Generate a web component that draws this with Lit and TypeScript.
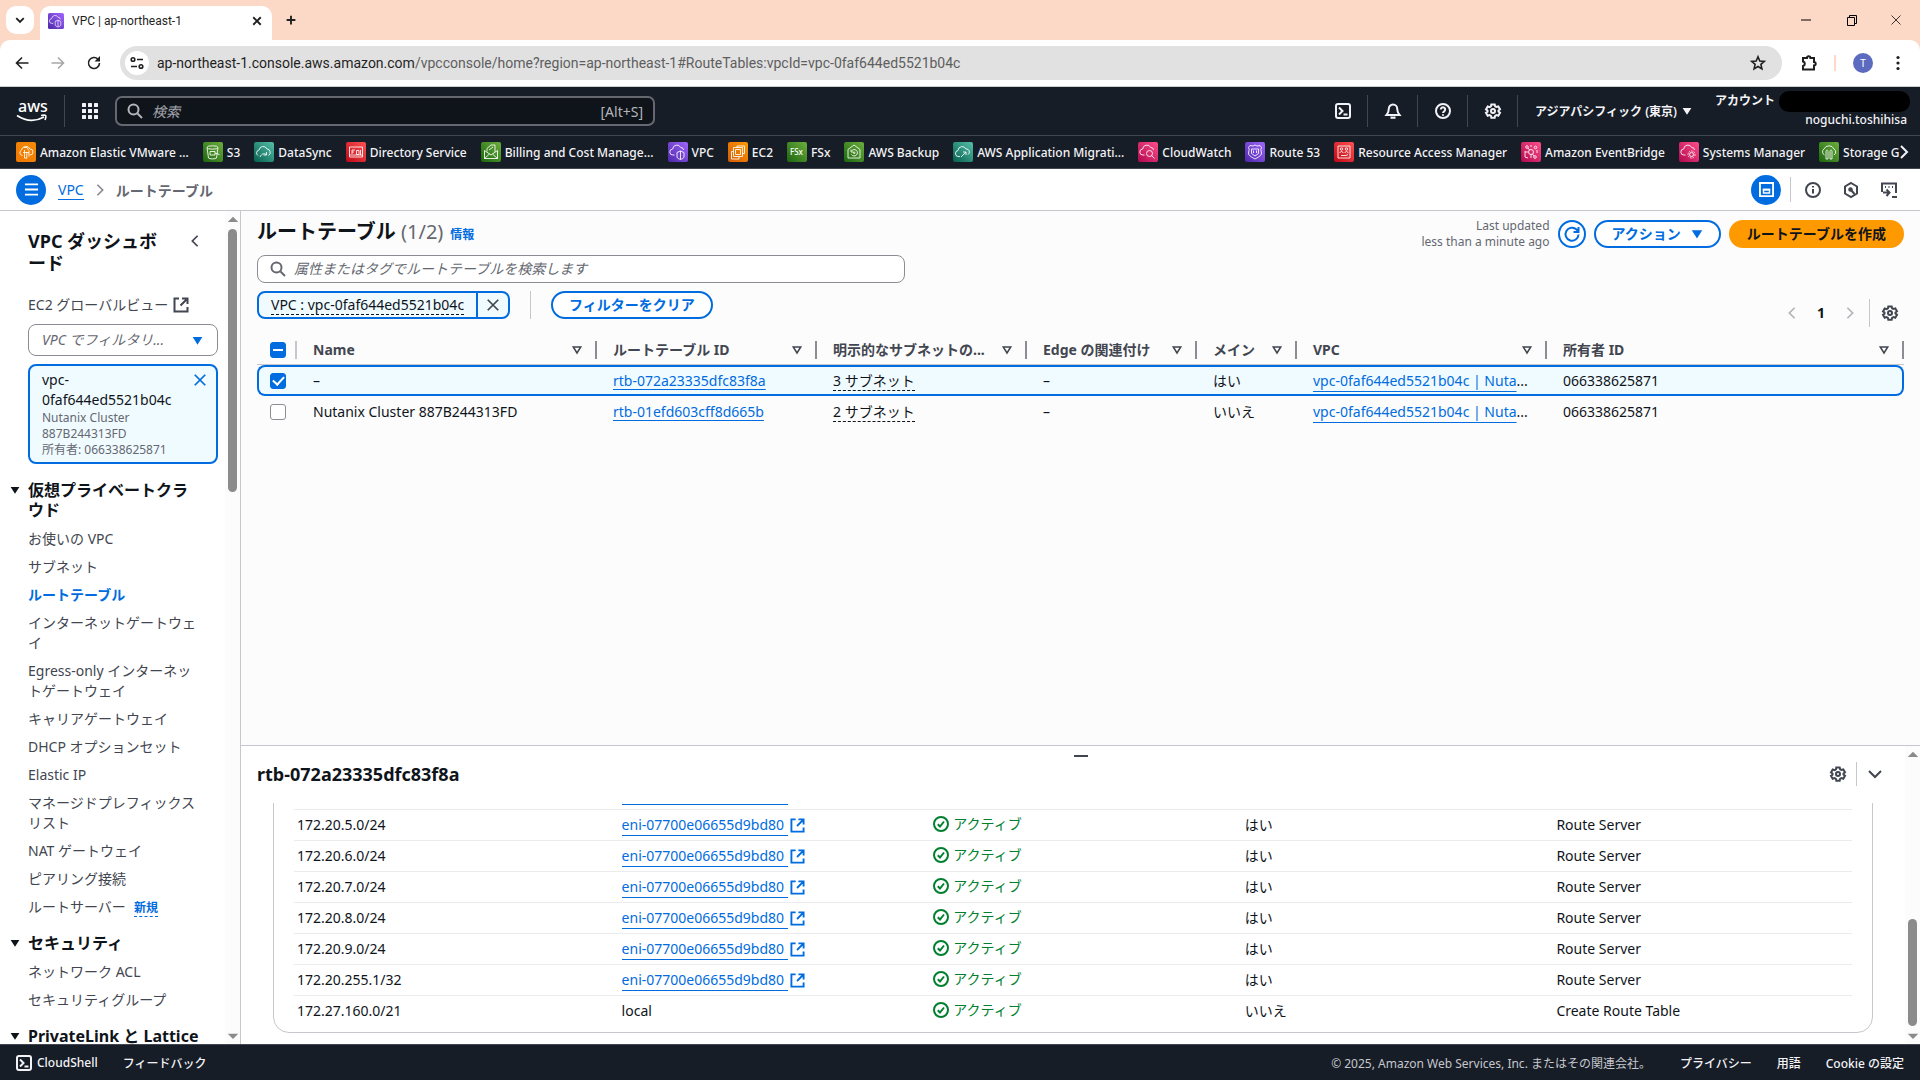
import { LitElement, html, svg, css } from "lit";
import { customElement, property } from "lit/decorators.js";

const shapes: Record<string, any> = {
  chevronLeft: svg`<path d="M11 2 5 8l6 6"/>`,
  chevronRight: svg`<path d="m5 2 6 6-6 6"/>`,
  chevronDown: svg`<path d="m2 5 6 6 6-6"/>`,
  close: svg`<path d="m2 2 12 12M14 2 2 14"/>`,
  plus: svg`<path d="M8 1v14M1 8h14"/>`,
  minimize: svg`<path d="M3 8h10"/>`,
  restore: svg`<path d="M3.500 5.500h7v8h-7zM5.500 5.500v-2h7v8h-2"/>`,
  back: svg`<path d="M14.500 8H2.500M8 2.500 2.500 8 8 13.500"/>`,
  forward: svg`<path d="M1.500 8h12M8 2.500 13.500 8 8 13.500"/>`,
  reload: svg`<path d="M13.500 8A5.500 5.500 0 1 1 12 4.200"/><path d="M14 1v5.500H8.500z" fill="currentColor" stroke="none"/>`,
  refresh: svg`<path d="M14.500 8.500a6.500 6.500 0 1 1-2-5l2 2M14.500 1v5h-5"/>`,
  tune: svg`<circle cx="4" cy="4.500" r="1.800"/><path d="M8 4.500h6M2 11.500h6"/><circle cx="12" cy="11.500" r="1.800"/>`,
  star: svg`<path d="m8 1.800 1.800 4.200 4.500.4-3.400 3 1 4.500L8 11.500l-3.900 2.400 1-4.500-3.400-3 4.500-.4z"/>`,
  puzzle: svg`<path d="M2 3h4a1.700 1.700 0 0 1 3.400 0H13v4a1.700 1.700 0 0 1 0 3.400V14.500H2V11a2.300 2.300 0 0 0 0-4.500z"/>`,
  dots: svg`<g fill="currentColor" stroke="none"><circle cx="8" cy="2.500" r="1.600"/><circle cx="8" cy="8" r="1.600"/><circle cx="8" cy="13.500" r="1.600"/></g>`,
  grid: svg`<g fill="currentColor" stroke="none">${[0, 6, 12].map((x) => [0, 6, 12].map((y) => svg`<rect x=${x} y=${y} width="4" height="4" rx=".5"/>`))}</g>`,
  search: svg`<circle cx="6.500" cy="6.500" r="5"/><path d="m10.500 10.500 4.500 4.500"/>`,
  shell: svg`<rect x="1" y="1" width="14" height="14" rx="2"/><path d="m4 4.500 3.500 3.500L4 11.500M8.500 11.500h4"/>`,
  bell: svg`<path d="M8 1.500a4.200 4.200 0 0 0-4.200 4.200c0 3-.8 4.500-2.300 6.300h13c-1.500-1.800-2.300-3.300-2.300-6.300A4.200 4.200 0 0 0 8 1.500z"/><path d="M6.500 13.500v1.300h3v-1.300"/>`,
  help: svg`<circle cx="8" cy="8" r="7"/><path d="M5.800 6.500a2.200 2.200 0 1 1 3.400 1.800C8.300 8.900 8 9.200 8 10M8 11.300v1.400"/>`,
  gear: svg`<path d="m6.300 1.500-.4 1.900-1.300.7-1.900-.6-1.700 2.900L2.500 7.500v1.300L1 9.800l1.700 2.900 1.900-.6 1.300.7.400 1.900h3.400l.4-1.900 1.300-.7 1.900.6L15 9.800l-1.500-1.200V7.400L15 6.300l-1.700-2.900-1.900.6-1.300-.7-.4-1.800z"/><circle cx="8" cy="8" r="2"/>`,
  menu: svg`<path d="M1 2.500h14M1 8h14M1 13.500h14"/>`,
  splitPanel: svg`<path d="M1 1h14v14H1z"/><path d="M4.800 8.200h6.400v3.600H4.800z" stroke-width="1.500"/><path d="M4 8h8"/>`,
  info: svg`<circle cx="8" cy="8" r="7"/><path d="M8 7v4.500M8 4v1.600"/>`,
  hexagon: svg`<path d="m8 1 6 3.500v7L8 15l-6-3.500v-7z"/><path d="m8 8 3.500 4"/><circle cx="7.500" cy="7.500" r="1.300" fill="currentColor"/>`,
  prompt: svg`<path d="M1 10V1.500h14V11M4 5h1M7.500 5h1M11 5h1M2 10.500h6M5.500 7.500l3 3-3 3.500M11 15h5"/>`,
  external: svg`<path d="M6 1.500H1.500v13h13V10M9 1.500h5.500V7M14 2 7.500 8.500"/>`,
  check: svg`<circle cx="8" cy="8" r="7"/><path d="m4.800 8.200 2.200 2.300 4-5"/>`,
  triangle: svg`<path d="M1 3h14L8 14z" fill="currentColor" stroke="none"/>`,
  triangleOpen: svg`<path d="M3 4h10l-5 8z"/>`,
  triangleUp: svg`<path d="M8 5 15 12H1z" fill="currentColor" stroke="none"/>`,
  triangleDown: svg`<path d="m8 12 7-7H1z" fill="currentColor" stroke="none"/>`,
};

@customElement("ui-icon")
class UiIcon extends LitElement {
  @property() name = "";
  static styles = css`
    :host { display: inline-flex; flex: none; width: 16px; height: 16px; }
    svg { width: 100%; height: 100%; fill: none; stroke: currentColor; stroke-width: var(--stroke, 2); overflow: visible; }
  `;
  render() {
    return html`<svg viewBox="0 0 16 16" aria-hidden="true">${shapes[this.name]}</svg>`;
  }
}

const cloud = svg`<path d="M6.500 13H5a3 3 0 0 1-.3-6 4.200 4.200 0 0 1 8-1.500A2.600 2.600 0 0 1 15.500 8"/>`;
const glyphs: Record<string, any> = {
  evs: svg`<path d="M6.500 13.500H6a3 3 0 0 1-.5-5.500A4.500 4.500 0 0 1 14 7a3 3 0 0 1 0 6M7 10.500h6M8.500 8v8M13 8.500v6M10.800 10.500v6M8.500 16h2.300M8 5.500h3l1.500 2.500"/>`,
  s3: svg`<ellipse cx="9.500" cy="5.500" rx="5.500" ry="1.700"/><path d="m4 5.500 1.500 10.500c1 1.200 7 1.200 8 0L15 5.500M7 9.500h5v3.500H7zM12 11l4.500 1.500"/>`,
  datasync: svg`<path d="M4 13.500a3 3 0 0 1 1-5.500 4.200 4.200 0 0 1 8-1A3.500 3.500 0 0 1 14.500 13.500M6 15c2-4 5-4 6.500-2M12.500 10v3h-3"/>`,
  directory: svg`<path d="M3.500 5h13v10h-13zM6 12V8h3M6 10h2M10.500 8.500h2.500v4h-2.500zM14.500 8v5M3.500 13h13"/>`,
  billing: svg`<path d="M3.500 8.500v8h13v-8L10 13zM3.500 16.500l5-4.500M16.500 16.500l-5-4.500M6 9.500V6.500L10 3h4v7M8 8l4-3"/>`,
  vpc: svg`${cloud}<path d="M9 10.500 12.500 9l3.500 1.500v4.500c0 1-2 2-3.500 2.500-1.500-.5-3.500-1.500-3.500-2.500zM12.500 9v8.500"/>`,
  ec2: svg`<path d="M7.500 7.500h5v5h-5zM9 5.500V4h7.500v7.500H15M11 15v2H3.500V9.500H5M5.500 5.500h9v9h-9z"/>`,
  fsx: svg`<text x="3" y="13" font-size="8" font-family="Noto Sans, sans-serif" fill="#fff" stroke="none">FSx</text>`,
  backup: svg`<path d="m10 3 6 4.500V16H4V7.500zM7.500 9a3.200 3.200 0 1 1 0 3.500M7 7.500v2.500h2.500"/><circle cx="10.200" cy="10.800" r=".8"/>`,
  migration: svg`<path d="M7 14.500H6a3 3 0 0 1-1-6 4.200 4.200 0 0 1 8-1.500 3 3 0 0 1 2 5.500M8 15l5-5M10 10h3v3"/>`,
  cloudwatch: svg`${cloud}<circle cx="11.500" cy="11.500" r="3"/><path d="m13.500 13.500 3 3"/>`,
  route53: svg`<path d="m10 3 2 1 3-.5 1.500 2-.7 2 .7 3.500c0 3-4 4.500-6.500 6-2.500-1.500-6.500-3-6.500-6L4.200 7.500l-.7-2 1.500-2 3 .5z"/><path d="M6.500 7h7v4.500L10 14l-3.500-2.500zM8.500 8.500v2.500M11.500 8.500v2.500"/>`,
  ram: svg`<path d="M4 4h12v12H4z"/><circle cx="7.500" cy="7" r="1.200"/><circle cx="12.500" cy="7" r="1.200"/><path d="M6 11c0-2 3-2 3 0M11 11c0-2 3-2 3 0M7 13.500h5l2-1"/>`,
  eventbridge: svg`<circle cx="10" cy="10" r="2.500"/><circle cx="6" cy="5" r="1.300"/><circle cx="14" cy="15" r="1.300"/><circle cx="14.500" cy="5.500" r="1.300"/><path d="M7 6l1.500 2M13 14l-1.500-2M4 9v6l3 1M16 11V8M7 10H4M11 4H9M10 12.500V16"/>`,
  systems: svg`${cloud}<circle cx="12.500" cy="12.500" r="3.500" stroke-dasharray="1.600 1"/><circle cx="12.500" cy="12.500" r="2"/>`,
  storage: svg`<path d="M5.500 13a3.500 3.500 0 0 1-.5-6 5.500 5.500 0 0 1 10 0 3.500 3.500 0 0 1 0 6M7 17V9.500c0-2 2-2 2 0V17M11 17V9.500c0-2 2-2 2 0V17M7 17h2M11 17h2"/>`,
};
const tones: Record<string, [string, string]> = {
  orange: ["#d45b07", "#ff9900"],
  amber: ["#f07800", "#f58b05"],
  green: ["#1b660f", "#6cae3e"],
  teal: ["#055f4e", "#56c0a7"],
  red: ["#bd0816", "#ff5252"],
  purple: ["#4d27a8", "#a166ff"],
  pink: ["#b0084d", "#ff4f8b"],
};

@customElement("service-icon")
class ServiceIcon extends LitElement {
  @property() glyph = "";
  @property() tone = "green";
  static styles = css`
    :host { display: inline-flex; flex: none; width: 20px; height: 20px; }
    svg { width: 100%; height: 100%; }
    .mark { fill: none; stroke: #fff; stroke-width: 1; stroke-opacity: .85; }
  `;
  render() {
    const [from, to] = tones[this.tone];
    return html`<svg viewBox="0 0 20 20" aria-hidden="true">
      <defs><linearGradient id="g" x1="0" y1="1" x2="1" y2="0"><stop offset="0" stop-color=${from}/><stop offset="1" stop-color=${to}/></linearGradient></defs>
      <rect width="20" height="20" rx="2" fill="url(#g)"/><g class="mark">${glyphs[this.glyph]}</g></svg>`;
  }
}

const base = css`
  * { box-sizing: border-box; }
  button, input, select { font: inherit; color: inherit; margin: 0; padding: 0; border: 0; background: none; }
  button { display: inline-flex; align-items: center; justify-content: center; }
  a { color: inherit; text-decoration: none; }
  ul, h1, h2, h3 { margin: 0; padding: 0; list-style: none; }
`;

@customElement("browser-chrome")
class BrowserChrome extends LitElement {
  static styles = [base, css`
    :host { display: block; background: #fcd9c7; color: #1f1f1f; font-family: Roboto, "Noto Sans", sans-serif; }
    .tabs { display: flex; height: 40px; align-items: center; padding: 0 18px 0 6px; }
    .tab-search { width: 28px; height: 28px; border-radius: 10px; background: #fff; }
    .tab { display: flex; align-items: center; align-self: flex-end; gap: 8px; width: 232px; height: 34px; margin: 0 14px 0 6px; padding: 0 10px 4px 8px; border-radius: 10px 10px 0 0; background: #fff; font-size: 12px; }
    .tab service-icon { width: 16px; height: 16px; }
    .tab-title { flex: 1; }
    .small { width: 10px; height: 10px; --stroke: 3; }
    .windows { display: flex; gap: 30px; margin-left: auto; color: #000; --stroke: 1; }
    .windows .small { width: 12px; height: 12px; --stroke: 1; }
    .bar { display: flex; align-items: center; height: 47px; padding: 0 14px; background: #fff; border-bottom: 1px solid #d0d0d0; border-radius: 10px 10px 0 0; }
    .nav { display: flex; gap: 20px; width: 106px; }
    .off { color: #a8a8a8; }
    .omni { display: flex; flex: 1; align-items: center; gap: 8px; height: 34px; padding: 0 16px 0 5px; border-radius: 17px; background: #e1e1e1; font-size: 14px; }
    .site { width: 24px; height: 24px; border-radius: 50%; background: #fff; }
    .url { flex: 1; color: #1f1f1f; }
    .path { color: #5e5e5e; }
    .omni ui-icon, .nav ui-icon { --stroke: 1.6; }
    .tools { display: flex; align-items: center; gap: 17px; margin-left: 19px; }
    .rule { width: 2px; height: 16px; background: #fcd9c7; }
    .avatar { width: 20px; height: 20px; border-radius: 50%; background: #5c6bc0; color: #fff; font-size: 10px; }
  `];
  render() {
    return html`
      <div class="tabs">
        <button class="tab-search" aria-label="タブを検索"><ui-icon class="small" name="chevronDown"></ui-icon></button>
        <div class="tab"><service-icon glyph="vpc" tone="purple"></service-icon><span class="tab-title">VPC | ap-northeast-1</span><button aria-label="タブを閉じる"><ui-icon class="small" name="close"></ui-icon></button></div>
        <button aria-label="新しいタブ"><ui-icon class="small" name="plus"></ui-icon></button>
        <div class="windows">
          <button aria-label="最小化"><ui-icon name="minimize"></ui-icon></button>
          <button aria-label="元に戻す"><ui-icon name="restore"></ui-icon></button>
          <button aria-label="閉じる"><ui-icon class="small" name="close"></ui-icon></button>
        </div>
      </div>
      <div class="bar">
        <div class="nav">
          <button aria-label="戻る"><ui-icon name="back"></ui-icon></button>
          <button class="off" aria-label="進む"><ui-icon name="forward"></ui-icon></button>
          <button aria-label="再読み込み"><ui-icon name="reload"></ui-icon></button>
        </div>
        <div class="omni">
          <button class="site" aria-label="サイト情報"><ui-icon name="tune"></ui-icon></button>
          <span class="url">ap-northeast-1.console.aws.amazon.com<span class="path">/vpcconsole/home?region=ap-northeast-1#RouteTables:vpcId=vpc-0faf644ed5521b04c</span></span>
          <button aria-label="ブックマーク"><ui-icon name="star"></ui-icon></button>
        </div>
        <div class="tools">
          <button aria-label="拡張機能"><ui-icon name="puzzle"></ui-icon></button>
          <span class="rule"></span>
          <button class="avatar" aria-label="プロフィール">T</button>
          <button aria-label="メニュー"><ui-icon name="dots"></ui-icon></button>
        </div>
      </div>`;
  }
}

const favorites: [string, string, string][] = [
  ["evs", "amber", "Amazon Elastic VMware ..."],
  ["s3", "green", "S3"],
  ["datasync", "teal", "DataSync"],
  ["directory", "red", "Directory Service"],
  ["billing", "green", "Billing and Cost Manage..."],
  ["vpc", "purple", "VPC"],
  ["ec2", "orange", "EC2"],
  ["fsx", "green", "FSx"],
  ["backup", "green", "AWS Backup"],
  ["migration", "teal", "AWS Application Migrati..."],
  ["cloudwatch", "pink", "CloudWatch"],
  ["route53", "purple", "Route 53"],
  ["ram", "red", "Resource Access Manager"],
  ["eventbridge", "pink", "Amazon EventBridge"],
  ["systems", "pink", "Systems Manager"],
  ["storage", "green", "Storage G"],
];

@customElement("console-header")
class ConsoleHeader extends LitElement {
  static styles = [base, css`
    :host { display: block; background: #161d26; color: #f3f3f7; font-size: 12px; font-weight: 500; }
    .top { display: flex; height: 49px; align-items: center; border-bottom: 1px solid #424650; }
    .logo { width: 32px; height: 24px; margin: 0 16px; }
    .rule { width: 1px; height: 32px; background: #424650; }
    .apps { margin: 0 17px; }
    .search { display: flex; width: 540px; height: 30px; align-items: center; gap: 9px; padding: 0 10px; border: 2px solid #656871; border-radius: 7px; background: #0f141a; color: #b4b4bb; font-size: 14px; font-weight: 400; }
    .search input { flex: 1; min-width: 0; outline: 0; }
    .search input::placeholder { color: #a4a4ad; font-style: italic; opacity: 1; }
    .tools { display: flex; align-items: center; margin-left: auto; }
    .tools > button:not(.region) { width: 49px; height: 32px; }
    .region { gap: 5px; padding: 0 23px 0 17px; font-weight: 600; }
    .region ui-icon { width: 10px; height: 10px; }
    .account { display: flex; flex-direction: column; align-items: flex-end; padding-right: 10px; line-height: 18px; }
    .who { display: flex; align-items: center; gap: 4px; font-weight: 700; }
    .mask { width: 131px; height: 21px; border-radius: 10px; background: #000; }
    .name { padding: 0 3px 4px 0; line-height: 16px; }
    .favs { display: flex; height: 33px; align-items: center; padding: 0 8px 0 16px; border-bottom: 1px solid #424650; }
    .list { display: flex; flex: 1; gap: 14px; min-width: 0; overflow: hidden; }
    .list a { display: inline-flex; flex: none; align-items: center; gap: 4px; white-space: nowrap; }
    .next { margin-left: -5px; }
  `];
  render() {
    return html`
      <div class="top">
        <a class="logo" href="#" aria-label="aws"><svg width="32" height="24" viewBox="0 0 32 24"><text x="2" y="13" font-size="16" font-family="Noto Sans, sans-serif" fill="#fff">aws</text><path d="M1 16.500c9 6 19 6 27 1.500M25 16.500c5-1 6-.5 4 4.500" fill="none" stroke="#fff" stroke-width="1.600"/></svg></a>
        <span class="rule"></span>
        <button class="apps" aria-label="サービス"><ui-icon name="grid"></ui-icon></button>
        <label class="search"><ui-icon name="search"></ui-icon><input type="search" placeholder="検索" aria-label="検索"><span>[Alt+S]</span></label>
        <div class="tools">
          <button aria-label="CloudShell"><ui-icon name="shell"></ui-icon></button><span class="rule"></span>
          <button aria-label="通知"><ui-icon name="bell"></ui-icon></button><span class="rule"></span>
          <button aria-label="ヘルプ"><ui-icon name="help"></ui-icon></button><span class="rule"></span>
          <button aria-label="設定"><ui-icon name="gear"></ui-icon></button><span class="rule"></span>
          <button class="region">アジアパシフィック (東京) <ui-icon name="triangle"></ui-icon></button>
        </div>
        <div class="account"><span class="who">アカウント<span class="mask"></span></span><span class="name">noguchi.toshihisa</span></div>
      </div>
      <nav class="favs"><div class="list">${favorites.map(([g, t, label]) => html`<a href="#"><service-icon glyph=${g} tone=${t}></service-icon>${label}</a>`)}</div>
        <button class="next" aria-label="次へ"><ui-icon name="chevronRight"></ui-icon></button></nav>`;
  }
}

@customElement("scroll-rail")
class ScrollRail extends LitElement {
  static styles = css`
    :host { display: flex; flex-direction: column; align-items: center; width: 15px; padding: 2px 0; background: #fcfcfc; color: #8b8b8b; }
    ui-icon { width: 12px; height: 12px; }
    .track { flex: 1; display: flex; flex-direction: column; padding: 4px 0; }
    .thumb { width: 9px; border-radius: 5px; background: #8b8b8b; }
    :host([end]) .track { justify-content: flex-end; }
    :host([end]) .thumb { height: 41%; }
    :host(:not([end])) .thumb { height: 33%; }
  `;
  render() {
    return html`<ui-icon name="triangleUp"></ui-icon><div class="track"><div class="thumb"></div></div><ui-icon name="triangleDown"></ui-icon>`;
  }
}

const sections: { title: string; items: string[] }[] = [
  { title: "仮想プライベートクラウド", items: ["お使いの VPC", "サブネット", "ルートテーブル", "インターネットゲートウェイ", "Egress-only インターネットゲートウェイ", "キャリアゲートウェイ", "DHCP オプションセット", "Elastic IP", "マネージドプレフィックスリスト", "NAT ゲートウェイ", "ピアリング接続", "ルートサーバー"] },
  { title: "セキュリティ", items: ["ネットワーク ACL", "セキュリティグループ"] },
  { title: "PrivateLink と Lattice", items: [] },
];

@customElement("side-nav")
class SideNav extends LitElement {
  static styles = [base, css`
    :host { display: flex; min-height: 0; border-right: 1px solid #c6c6cd; background: #fff; color: #424650; font-size: 14px; line-height: 20px; }
    .body { flex: 1; min-width: 0; overflow: hidden; padding: 19px 7px 0 10px; }
    .head { display: flex; justify-content: space-between; padding: 0 16px 0 18px; color: #0f141a; }
    h2 { width: 134px; font-size: 18px; line-height: 22px; }
    .head button { align-self: flex-start; height: 22px; color: #424650; }
    .head ui-icon { width: 14px; height: 14px; }
    .global { display: flex; align-items: center; gap: 5px; margin: 21px 0 9px 18px; }
    .picker { display: flex; position: relative; margin-left: 18px; color: #006ce0; }
    .picker select { appearance: none; width: 100%; height: 32px; padding: 0 13px; border: 1px solid #8c8c94; border-radius: 8px; background: #fff; color: #656871; font-style: italic; }
    .picker ui-icon { position: absolute; right: 15px; top: 11px; width: 11px; height: 11px; pointer-events: none; }
    .card { display: flex; align-items: flex-start; justify-content: space-between; margin: 8px 0 16px 18px; padding: 4px 9px 4px 12px; border: 2px solid #006ce0; border-radius: 8px; background: #f0fbff; }
    .card-text { width: 136px; color: #0f141a; overflow-wrap: anywhere; }
    .card-text small { display: block; color: #656871; font-size: 12px; line-height: 16px; }
    .card button { margin-top: 3px; color: #006ce0; }
    .card ui-icon { width: 14px; height: 14px; }
    h3 { display: grid; grid-template-columns: 10px 1fr; gap: 8px; padding-right: 16px; color: #0f141a; font-size: 16px; line-height: 20px; }
    h3 ui-icon { width: 10px; height: 10px; margin-top: 5px; }
    ul { display: grid; gap: 8px; padding: 9px 21px 16px 18px; }
    .current { color: #006ce0; font-weight: 700; }
    .new { margin-left: 8px; border-bottom: 1px dashed #006ce0; color: #006ce0; font-size: 12px; font-weight: 700; line-height: 16px; }
  `];
  render() {
    return html`
      <div class="body">
        <div class="head"><h2>VPC ダッシュボード</h2><button aria-label="閉じる"><ui-icon name="chevronLeft"></ui-icon></button></div>
        <a class="global" href="#">EC2 グローバルビュー<ui-icon name="external"></ui-icon></a>
        <div class="picker"><select aria-label="VPC でフィルタリング"><option>VPC でフィルタリ...</option></select><ui-icon name="triangle"></ui-icon></div>
        <div class="card">
          <div class="card-text">vpc-0faf644ed5521b04c<small>Nutanix Cluster 887B244313FD</small><small>所有者: 066338625871</small></div>
          <button aria-label="削除"><ui-icon name="close"></ui-icon></button>
        </div>
        ${sections.map((s) => html`
          <h3><ui-icon name="triangle"></ui-icon><span>${s.title}</span></h3>
          <ul>${s.items.map((i) => html`<li><a href="#" class=${i === "ルートテーブル" ? "current" : ""}>${i}</a>${i === "ルートサーバー" ? html`<a class="new" href="#">新規</a>` : ""}</li>`)}</ul>`)}
      </div>
      <scroll-rail></scroll-rail>`;
  }
}

const tables = [
  { selected: true, name: "–", id: "rtb-072a23335dfc83f8a", subnets: "3 サブネット", main: "はい" },
  { selected: false, name: "Nutanix Cluster 887B244313FD", id: "rtb-01efd603cff8d665b", subnets: "2 サブネット", main: "いいえ" },
];
const headings = ["Name", "ルートテーブル ID", "明示的なサブネットの...", "Edge の関連付け", "メイン", "VPC", "所有者 ID"];

@customElement("route-table-list")
class RouteTableList extends LitElement {
  static styles = [base, css`
    :host { display: block; padding: 7px 16px 0; background: #fcfcfc; color: #0f141a; font-size: 14px; line-height: 20px; }
    .head, .actions, .filters, .pages { display: flex; align-items: center; }
    .head { justify-content: space-between; height: 36px; align-items: flex-start; }
    .title { display: flex; align-items: baseline; gap: 7px; }
    h1 { font-size: 20px; line-height: 28px; }
    h1 span { color: #656871; font-weight: 400; }
    .title a { color: #006ce0; font-size: 12px; font-weight: 700; }
    .actions { gap: 8px; }
    .updated { color: #656871; font-size: 12px; line-height: 16px; text-align: right; }
    .pill { height: 28px; padding: 0 16px; gap: 10px; border: 2px solid #006ce0; border-radius: 14px; background: #fff; color: #006ce0; font-weight: 700; white-space: nowrap; }
    .pill ui-icon { width: 12px; height: 12px; }
    .pill.round { width: 28px; padding: 0; }
    .pill.round ui-icon { width: 16px; height: 16px; }
    .pill.primary { border-color: #ff9900; background: #ff9900; color: #0f141a; }
    .search { display: flex; align-items: center; gap: 8px; width: 648px; max-width: 100%; height: 28px; margin: 1px 0 8px; padding: 0 12px; border: 1px solid #8c8c94; border-radius: 8px; background: #fff; color: #656871; }
    .search input { flex: 1; outline: 0; }
    .search input::placeholder { color: #656871; font-style: italic; opacity: 1; }
    .filters { height: 45px; align-items: flex-start; }
    .token { display: flex; height: 28px; border: 2px solid #006ce0; border-radius: 8px; background: #f0fbff; }
    .token button:first-child { padding: 0 12px; border-right: 2px solid #006ce0; }
    .token button:first-child span { line-height: 18px; border-bottom: 1px dashed #0f141a; }
    .token button:last-child { width: 30px; color: #424650; }
    .token ui-icon { width: 14px; height: 14px; }
    .rule { width: 1px; height: 28px; background: #c6c6cd; }
    .filters > .rule { margin: 0 20px; }
    .pages { gap: 18px; margin: 8px 6px 0 auto; color: #424650; }
    .pages b { color: #0f141a; font-weight: 700; }
    .pages .off { color: #b4b4bb; }
    .pages button ui-icon { width: 14px; height: 14px; }
    .pages .rule { margin: 0 -6px; }
    .pages .prefs ui-icon { width: 16px; height: 16px; }
    table { width: 100%; table-layout: fixed; border-collapse: separate; border-spacing: 0; }
    .c0 { width: 40px; } .c1 { width: 300px; } .c2 { width: 220px; } .c3 { width: 210px; } .c4 { width: 170px; } .c5 { width: 100px; } .c6 { width: 250px; }
    th { height: 29px; padding: 0 0 0 16px; border-bottom: 1px solid #c6c6cd; color: #424650; font-weight: 700; text-align: left; }
    th:first-child, td:first-child { padding-left: 13px; }
    .th { display: flex; align-items: center; justify-content: space-between; height: 18px; padding-right: 12px; border-right: 2px solid #8c8c94; white-space: nowrap; }
    th:first-child .th { padding: 0; border-color: #c6c6cd; }
    .th ui-icon { width: 12px; height: 12px; }
    td { height: 31px; padding: 0 17px 0 16px; overflow: hidden; white-space: nowrap; text-overflow: ellipsis; }
    .on td { border: solid #006ce0; border-width: 2px 0; background: #f0fbff; }
    .on td:first-child { padding-left: 11px; border-left-width: 2px; border-radius: 8px 0 0 8px; }
    .on td:last-child { border-right-width: 2px; border-radius: 0 8px 8px 0; }
    input[type="checkbox"] { appearance: none; display: grid; place-items: center; width: 16px; height: 16px; border: 1px solid #8c8c94; border-radius: 3px; background: #fff; }
    input[type="checkbox"]:checked, input[type="checkbox"]:indeterminate { border-color: #006ce0; background: #006ce0; }
    input:indeterminate::before { content: ""; width: 10px; height: 2px; background: #fff; }
    input:checked::before { content: ""; width: 9px; height: 5px; margin-bottom: 3px; border: solid #fff; border-width: 0 0 2px 2px; rotate: -47deg; }
    td a { color: #006ce0; text-decoration: underline; text-underline-offset: 3px; }
    td .low { text-underline-offset: 5px; }
    .hint { border-bottom: 1px dashed #0f141a; }
  `];
  render() {
    return html`
      <div class="head">
        <div class="title"><h1>ルートテーブル <span>(1/2)</span></h1><a href="#">情報</a></div>
        <div class="actions"><span class="updated">Last updated<br>less than a minute ago</span>
          <button class="pill round" aria-label="更新"><ui-icon name="refresh"></ui-icon></button>
          <button class="pill">アクション<ui-icon name="triangle"></ui-icon></button>
          <button class="pill primary">ルートテーブルを作成</button></div>
      </div>
      <label class="search"><ui-icon name="search"></ui-icon><input type="search" aria-label="検索" placeholder="属性またはタグでルートテーブルを検索します"></label>
      <div class="filters">
        <div class="token"><button><span>VPC : vpc-0faf644ed5521b04c</span></button><button aria-label="フィルターを削除"><ui-icon name="close"></ui-icon></button></div>
        <span class="rule"></span><button class="pill">フィルターをクリア</button>
        <div class="pages"><button class="off" aria-label="前のページ"><ui-icon name="chevronLeft"></ui-icon></button><b>1</b><button class="off" aria-label="次のページ"><ui-icon name="chevronRight"></ui-icon></button><span class="rule"></span><button class="prefs" aria-label="設定"><ui-icon name="gear"></ui-icon></button></div>
      </div>
      <table>
        <colgroup>${[0, 1, 2, 3, 4, 5, 6, 7].map((n) => html`<col class="c${n}">`)}</colgroup>
        <thead><tr><th><div class="th"><input type="checkbox" aria-label="すべて選択" .indeterminate=${true}></div></th>
          ${headings.map((h) => html`<th><div class="th">${h}<ui-icon name="triangleOpen"></ui-icon></div></th>`)}</tr></thead>
        <tbody>${tables.map((t) => html`<tr class=${t.selected ? "on" : ""}>
          <td><input type="checkbox" aria-label=${t.id} .checked=${t.selected}></td><td>${t.name}</td><td><a href="#">${t.id}</a></td>
          <td><span class="hint">${t.subnets}</span></td><td>–</td><td>${t.main}</td>
          <td><a class="low" href="#">vpc-0faf644ed5521b04c | Nuta</a>...</td><td>066338625871</td></tr>`)}</tbody>
      </table>`;
  }
}

const routes = ["172.20.4.0/24", "172.20.5.0/24", "172.20.6.0/24", "172.20.7.0/24", "172.20.8.0/24", "172.20.9.0/24", "172.20.255.1/32"]
  .map((dest) => ({ dest, target: "eni-07700e06655d9bd80", spread: "はい", origin: "Route Server" }))
  .concat([{ dest: "172.27.160.0/21", target: "local", spread: "いいえ", origin: "Create Route Table" }]);

@customElement("split-panel")
class SplitPanel extends LitElement {
  static styles = [base, css`
    :host { display: flex; height: 299px; border-top: 1px solid #c6c6cd; background: #fff; color: #0f141a; font-size: 14px; line-height: 20px; }
    .main { display: flex; flex: 1; flex-direction: column; min-width: 0; }
    .handle { display: flex; justify-content: center; padding: 9px 0 0 15px; color: #424650; }
    .handle span { width: 14px; height: 2px; background: currentColor; }
    .head { display: flex; align-items: center; height: 34px; padding: 0 22px 0 16px; }
    h2 { flex: 1; font-size: 18px; line-height: 22px; }
    .head button { color: #424650; }
    .rule { width: 1px; height: 24px; margin: 0 10px; background: #c6c6cd; }
    .clip { display: flex; flex: 1; flex-direction: column; justify-content: flex-end; min-height: 0; margin: 12px 32px 11px 32px; overflow: hidden; }
    .box { padding: 0 20px 6px; border: 1px solid #c6c6cd; border-radius: 16px; }
    table { width: 100%; table-layout: fixed; border-collapse: separate; border-spacing: 0; }
    td { height: 31px; padding: 0 0 0 16px; border-top: 1px solid #ebebf0; white-space: nowrap; }
    td:first-child { padding-left: 3px; }
    a { color: #006ce0; }
    a span { padding-right: 4px; border-bottom: 1px solid #006ce0; }
    .icon-text { display: inline-flex; align-items: center; gap: 4px; }
    .link { display: inline-flex; align-items: center; gap: 2px; }
    .link ui-icon { width: 15px; height: 15px; }
    .ok { color: #00802f; }
  `];
  render() {
    return html`<div class="main">
        <div class="handle"><span></span></div>
        <div class="head"><h2>rtb-072a23335dfc83f8a</h2><button aria-label="設定"><ui-icon name="gear"></ui-icon></button><span class="rule"></span><button aria-label="閉じる"><ui-icon name="chevronDown"></ui-icon></button></div>
        <div class="clip"><div class="box"><table><tbody>${routes.map((r) => html`<tr>
          <td>${r.dest}</td>
          <td>${r.target === "local" ? r.target : html`<a class="link" href="#"><span>${r.target}</span><ui-icon name="external"></ui-icon></a>`}</td>
          <td><span class="icon-text ok"><ui-icon name="check"></ui-icon>アクティブ</span></td><td>${r.spread}</td><td>${r.origin}</td></tr>`)}</tbody></table></div></div>
      </div><scroll-rail end></scroll-rail>`;
  }
}

@customElement("app-root")
class AppRoot extends LitElement {
  static styles = [base, css`
    :host { display: grid; grid-template-columns: minmax(0, 1fr); grid-template-rows: auto auto 42px minmax(0, 1fr) 36px; height: 100vh; overflow: hidden; background: #fff; font-family: "Noto Sans", "Noto Sans CJK JP", sans-serif; font-size: 14px; }
    .crumbs { display: flex; align-items: center; padding: 0 23px 0 16px; border-bottom: 1px solid #c6c6cd; color: #424650; }
    .disc { width: 30px; height: 30px; border-radius: 50%; background: #006ce0; color: #fff; }
    .disc ui-icon { width: 15px; height: 15px; }
    .vpc { margin: 0 9px 0 12px; border-bottom: 1px solid #006ce0; color: #006ce0; line-height: 19px; }
    .vpc + ui-icon { width: 14px; height: 14px; color: #8c8c94; }
    .here { flex: 1; margin-left: 9px; color: #656871; font-weight: 700; }
    .crumb-tools { display: flex; align-items: center; gap: 22px; }
    .rule { width: 1px; height: 25px; margin: 0 14px 0 9px; background: #c6c6cd; }
    .work { display: grid; grid-template-columns: 241px minmax(0, 1fr); grid-template-rows: minmax(0, 1fr); min-height: 0; }
    main { display: grid; grid-template-columns: minmax(0, 1fr); grid-template-rows: minmax(0, 1fr) auto; min-height: 0; }
    footer { display: flex; align-items: center; gap: 25px; padding: 0 16px; border-top: 1px solid #424650; background: #161d26; color: #f3f3f7; font-size: 12px; font-weight: 500; }
    .shell { display: inline-flex; align-items: center; gap: 5px; }
    .copy { margin: 0 4px 0 auto; color: #c6c6cd; font-weight: 400; }
  `];
  render() {
    return html`
      <browser-chrome></browser-chrome>
      <console-header></console-header>
      <nav class="crumbs">
        <button class="disc" aria-label="メニュー"><ui-icon name="menu"></ui-icon></button>
        <a class="vpc" href="#">VPC</a><ui-icon name="chevronRight"></ui-icon><span class="here">ルートテーブル</span>
        <button class="disc" aria-label="分割パネル"><ui-icon name="splitPanel"></ui-icon></button><span class="rule"></span>
        <div class="crumb-tools">
          <button aria-label="情報"><ui-icon name="info"></ui-icon></button>
          <button aria-label="診断"><ui-icon name="hexagon"></ui-icon></button>
          <button aria-label="CloudShell"><ui-icon name="prompt"></ui-icon></button>
        </div>
      </nav>
      <div class="work">
        <side-nav></side-nav>
        <main><route-table-list></route-table-list><split-panel></split-panel></main>
      </div>
      <footer>
        <a class="shell" href="#"><ui-icon name="shell"></ui-icon>CloudShell</a><a href="#">フィードバック</a>
        <span class="copy">© 2025, Amazon Web Services, Inc. またはその関連会社。</span>
        <a href="#">プライバシー</a><a href="#">用語</a><a href="#">Cookie の設定</a>
      </footer>`;
  }
}
